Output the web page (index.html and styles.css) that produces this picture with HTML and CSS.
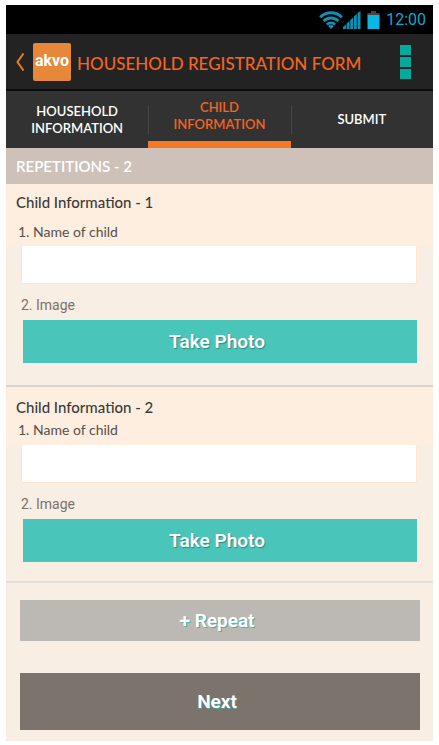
FILE: index.html
```html
<!DOCTYPE html>
<html lang="en">
<head>
<meta charset="utf-8">
<meta name="viewport" content="width=device-width, initial-scale=1">
<title>Household Registration Form</title>
<link rel="stylesheet" href="styles.css">
</head>
<body>
<div class="phone">
  <div class="status">
    <svg class="wifi" width="24" height="18" viewBox="0 0 24 18" aria-hidden="true">
      <g fill="none" stroke="#128fb5" stroke-width="3">
        <path d="M1.2 6.2a15.4 15.4 0 0 1 21.6 0"/>
        <path d="M4.6 10a10.4 10.4 0 0 1 14.8 0"/>
        <path d="M7.9 13.6a5.8 5.8 0 0 1 8.2 0" stroke-width="2.6"/>
      </g>
      <path d="M12 18l-2.700-2.800a3.800 3.800 0 0 1 5.400 0z" fill="#128fb5"/>
    </svg>
    <svg class="signal" width="18" height="18" viewBox="0 0 18 18" aria-hidden="true">
      <path d="M0 18v-2l2.900-2.500V18zM3.600 18v-5.500L6.500 10v8zM7.200 18V9l2.900-2.500V18zM10.900 18V5.500L13.800 3v15zM14.600 18V2L17.500 0v18z" fill="#128fb5"/>
    </svg>
    <svg class="battery" width="13" height="18" viewBox="0 0 13 18" aria-hidden="true">
      <path d="M4 0h5v2h3.500v3H.5V2H4z" fill="#444"/>
      <path d="M.5 4h12v14H.5z" fill="#08b7e4"/>
    </svg>
    <span class="clock">12:00</span>
  </div>

  <header class="appbar">
    <button class="back" type="button" aria-label="Back">
      <svg width="10" height="18" viewBox="0 0 10 18" aria-hidden="true"><path d="M8.500 .5L2.500 9l6 8.500" fill="none" stroke="#ee7a22" stroke-width="2"/></svg>
    </button>
    <span class="logo">akvo</span>
    <h1>HOUSEHOLD REGISTRATION FORM</h1>
    <button class="menu" type="button" aria-label="Menu">
      <svg width="11" height="34" viewBox="0 0 11 34" aria-hidden="true"><path d="M0 0h11v10H0zM0 12h11v10H0zM0 24h11v10H0z" fill="#05a89c"/></svg>
    </button>
  </header>

  <nav class="tabs">
    <a href="#household">HOUSEHOLD<br>INFORMATION</a>
    <a class="active" href="#child" aria-current="page">CHILD<br>INFORMATION</a>
    <a href="#submit">SUBMIT</a>
  </nav>

  <form>
    <h2 class="repetitions">REPETITIONS - 2</h2>

    <section class="child">
      <div class="intro">
        <h3>Child Information - 1</h3>
        <label for="name1">1. Name of child</label>
      </div>
      <input id="name1" type="text">
      <p class="question">2. Image</p>
      <button class="photo" type="button">Take Photo</button>
    </section>

    <section class="child compact">
      <div class="intro">
        <h3>Child Information - 2</h3>
        <label for="name2">1. Name of child</label>
      </div>
      <input id="name2" type="text">
      <p class="question">2. Image</p>
      <button class="photo" type="button">Take Photo</button>
    </section>

    <div class="actions">
      <button class="repeat" type="button">+ Repeat</button>
      <button class="next" type="submit">Next</button>
    </div>
  </form>
</div>
</body>
</html>
```

FILE: styles.css
```css
* {
  box-sizing: border-box;
}

body {
  margin: 0;
  padding: 5px 6px 4px;
  background: #fff;
  font-family: Lato, "Liberation Sans", sans-serif;
}

h1, h2, h3, p {
  margin: 0;
}

button {
  padding: 0;
  border: 0;
  background: none;
  cursor: pointer;
}

.phone {
  background: #f9eee3;
}

.status {
  display: flex;
  align-items: center;
  justify-content: flex-end;
  height: 29px;
  padding-right: 7px;
  background: #000;
}

.signal {
  margin-right: 6px;
}

.battery {
  margin-right: 6px;
}

.clock {
  color: #12a5d0;
  font-family: Roboto, sans-serif;
  font-size: 16px;
  line-height: 20px;
}

.appbar {
  display: flex;
  align-items: center;
  height: 57px;
  padding: 0 22px 0 9px;
  border-bottom: 2px solid #0c0c0c;
  background: #232323;
}

.back, .menu {
  display: flex;
}

.logo {
  width: 38px;
  height: 38px;
  margin: 0 6px 0 8px;
  border-radius: 2px;
  background: #e68739;
  color: #fff;
  font-family: Roboto, sans-serif;
  font-size: 16px;
  font-weight: 700;
  line-height: 36px;
  text-align: center;
}

h1 {
  flex: 1;
  padding-top: 4px;
  color: #f26522;
  font-size: 17px;
  font-weight: 500;
  line-height: 24px;
  white-space: nowrap;
}

.tabs {
  display: grid;
  grid-template-columns: repeat(3, 1fr);
  height: 57px;
  background: #323232;
}

.tabs a {
  position: relative;
  display: flex;
  align-items: center;
  justify-content: center;
  color: #fff;
  font-size: 13px;
  font-weight: 600;
  line-height: 17px;
  text-align: center;
  text-decoration: none;
}

.tabs a + a::before {
  content: "";
  position: absolute;
  top: 15px;
  left: 0;
  width: 1px;
  height: 28px;
  background: #484848;
}

.tabs .active {
  border-bottom: 7px solid #f47920;
  color: #f26522;
}

.repetitions {
  height: 36px;
  padding: 0 10px;
  background: #cdc1b9;
  color: #fff;
  font-size: 15px;
  font-weight: 600;
  line-height: 37px;
}

.child {
  display: flex;
  flex-direction: column;
  padding-bottom: 22px;
  border-bottom: 2px solid #d4d4d0;
}

.compact {
  padding-bottom: 19px;
  border-color: #e2deda;
}

.intro {
  display: flex;
  flex-direction: column;
  gap: 10px;
  padding: 8px 10px 4px;
  background: #feeee0;
}

.compact .intro {
  gap: 3px;
  padding: 10px 10px 5px;
}

h3 {
  color: #3e3a38;
  font-size: 15px;
  font-weight: 500;
  line-height: 20px;
}

label {
  padding-left: 2px;
  color: #57504c;
  font-size: 14px;
  line-height: 20px;
}

.child input {
  height: 38px;
  margin: 0 16px 0 15px;
  padding: 0 8px;
  border: 1px solid #fde6d0;
  border-top: 0;
  border-radius: 2px;
  background: #fff;
  font: inherit;
}

.question {
  margin-top: 11px;
  padding-left: 15px;
  color: #7b736c;
  font-family: Roboto, sans-serif;
  font-size: 14px;
  line-height: 20px;
}

.photo, .repeat, .next {
  padding-right: 6px;
  color: #fff;
  font-family: Roboto, sans-serif;
  font-size: 19px;
  font-weight: 600;
}

.photo {
  height: 43px;
  margin: 5px 16px 0 17px;
  background: #49c5ba;
  text-shadow: 1px 1px 1px #2a8d85;
}

.actions {
  display: flex;
  flex-direction: column;
  gap: 32px;
  padding: 17px 13px 11px 14px;
}

.repeat {
  height: 41px;
  background: #bcb8b4;
  text-shadow: 1px 1px 0 #4fb0a6;
}

.next {
  height: 57px;
  background: #7c736d;
  text-shadow: 1px 1px 0 #4fa69d;
}
```
